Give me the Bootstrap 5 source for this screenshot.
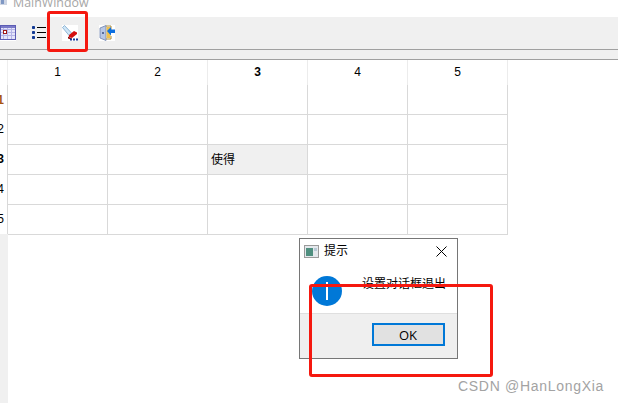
<!doctype html>
<html lang="zh"><head><meta charset="utf-8"><title>MainWindow</title>
<link href="https://cdn.jsdelivr.net/npm/bootstrap@5.3.0/dist/css/bootstrap.min.css" rel="stylesheet">
<style>
html,body{width:618px;height:403px;overflow:hidden;background:#fff;margin:0;font-family:"Liberation Sans","Noto Sans CJK SC",sans-serif;font-size:12px;color:#000}
.page-stage{position:relative;width:618px;height:403px;overflow:hidden}
.title-strip{height:17px;overflow:hidden;background:#fff;color:#a6a6a6;font:12.4px/13px "Open Sans",sans-serif}
.title-strip span{display:block;margin-top:-4px;margin-left:13px}
.title-ico{position:absolute;left:0;top:0}
.tool-strip{height:32px;background:#f0f0f0;padding-top:8px}
.tool-slot{width:16px;height:16px;background:#fff;line-height:0}
.slot-plain{background:transparent}
.gap-list{margin-left:15px}
.gap-brush{margin-left:15px}
.gap-door{margin-left:21px}
.sep-strip{height:11px;background:#f0f0f0;border-top:1px solid #a0a0a0;border-bottom:1px solid #a0a0a0}
.sheet-wrap{height:343px}
.row-head{width:8px;background:#f0f0f0;flex:none;height:343px}
.rh-cell{background:#fff;overflow:hidden;display:flex;align-items:center;justify-content:flex-end;height:30px;padding-right:3px;border-right:1px solid #d9d9d9;color:#000;font:12px "Liberation Sans",sans-serif;white-space:nowrap}
.rh-top{height:25px;background:#fff;border-right:1px solid #eee}
.rh-first{height:29px;color:#a8560f;font-weight:700}
.rh-bold{font-weight:700}
.sheet-grid{display:flex;flex-direction:column;width:500px;align-self:flex-start}
.hd-cell{height:25px;border-right:1px solid #ececec;text-align:center;font:12px/25px "Liberation Sans",sans-serif;background:#fff}
.hd-cell.strong{font-weight:700}
.grid-head{display:grid;grid-template-columns:repeat(5,100px);height:25px}
.body-cell{border-right:1px solid #d9d9d9;border-bottom:1px solid #d9d9d9;padding-left:3px;line-height:30px;font-size:12px;background:#fff}
.body-cell.picked{background:#f0f0f0}
.grid-rows{display:grid;grid-template-columns:repeat(5,100px);grid-template-rows:repeat(5,30px)}
.msg-win{position:absolute;left:299px;top:238px;width:159px;height:121px;border:1px solid #767676;background:#fff;display:flex;flex-direction:column}
.msg-top{height:24px;padding-left:4px;font-size:12px}
.msg-top .ttl{margin-left:5px;color:#000}
.msg-close{margin-left:auto;margin-right:10px;display:block}
.msg-main{height:50px;position:relative}
.msg-text{position:absolute;left:62px;top:14px;font-size:12px;line-height:14px;white-space:nowrap}
.msg-info{position:absolute;left:12px;top:13px}
.msg-foot{flex:1;background:#efefef;border-top:1px solid #dfdfdf;display:flex;justify-content:flex-end;padding:9px 12px 0 0}
.ok-btn{width:73px;height:23px;border:2px solid #0078d7;background:#e1e1e1;color:#000;font:13px/18px "Open Sans","Liberation Sans",sans-serif;text-align:center;padding:0 1px 0 0;border-radius:0}
.red-mark{position:absolute;border:3px solid #f5180f;border-radius:3px;pointer-events:none}
.mark-a{left:47px;top:11px;width:41px;height:41px}
.mark-b{left:309px;top:284px;width:184px;height:93px}
.wm-text{position:absolute;left:458px;top:377px;color:#a3a3a3;font:14px/18px "Liberation Sans",sans-serif;letter-spacing:.7px;white-space:nowrap}
</style></head><body>
<div class="page-stage">
 <div class="title-strip"><span>MainWindow</span></div>
 <svg class="title-ico" width="7" height="7" viewBox="0 0 7 7"><rect width="7" height="5" fill="#cfd6e4"/><rect x="1" width="3" height="4" fill="#7f98c4"/></svg>
 <div class="tool-strip d-flex">
  <div class="tool-slot"><svg width="16" height="16" viewBox="0 0 16 16"><rect x=".5" y=".5" width="15" height="14" fill="#e4e4fa" stroke="#5c5cb4"/><path d="M1 4.500h14M1 7.500h14M1 10.500h14M3.500 1v13M7.500 1v13M11.500 1v13" stroke="#b4b4e6" fill="none"/><rect x="1" y="1" width="14" height="2" fill="#7a7ac8"/><rect x="3.500" y="5.500" width="3" height="3" fill="#fff" stroke="#a01818"/></svg></div>
  <div class="tool-slot slot-plain gap-list"><svg width="16" height="16" viewBox="0 0 16 16"><g fill="#123a94"><rect x="1" y="1" width="3" height="3" rx=".7"/><rect x="1" y="6" width="3" height="3" rx=".7"/><rect x="1" y="11" width="3" height="3" rx=".7"/></g><path d="M6 2.500h9M6 7.500h9M6 12.500h9" stroke="#000" stroke-width="1"/></svg></div>
  <div class="tool-slot gap-brush"><svg width="16" height="16" viewBox="0 0 16 16"><path d="M.5 2.500l2-2 7.500 8-2.500 2.500z" fill="#cfe6f7" stroke="#7aa7cc" stroke-width=".8"/><path d="M7 10l5-4 3 1.500v1.500l-5 4-3-1z" fill="#d30f0f"/><path d="M6 11.500l4 2-1 1-3-1z" fill="#8d0a0a"/><g fill="#12379a"><rect x="8" y="13.500" width="2" height="2"/><rect x="11" y="13.500" width="2" height="2"/><rect x="14" y="13.500" width="2" height="2"/></g></svg></div>
  <div class="tool-slot gap-door"><svg width="16" height="16" viewBox="0 0 16 16"><path d="M1 3l6-2.500v15L1 13z" fill="#b7c7e6" stroke="#6e83ad" stroke-width=".8"/><path d="M7 1h5v4M12 11v3H7" fill="none" stroke="#a98a3a"/><rect x="7.500" y="2" width="4" height="11" fill="#eec04e"/><circle cx="4" cy="8" r="1" fill="#3a4f80"/><path d="M8 6l4-4v2.500h4v3.500h-4v2.500z" fill="#0c6fe0"/></svg></div>
 </div>
 <div class="sep-strip"></div>
 <div class="sheet-wrap d-flex">
  <div class="row-head">
   <div class="rh-top"></div>
   <div class="rh-cell rh-first"><span>1</span></div>
   <div class="rh-cell"><span>2</span></div>
   <div class="rh-cell rh-bold"><span>3</span></div>
   <div class="rh-cell"><span>4</span></div>
   <div class="rh-cell"><span>5</span></div>
  </div>
  <div class="sheet-grid">
   <div class="grid-head">
    <div class="hd-cell">1</div><div class="hd-cell">2</div><div class="hd-cell strong">3</div><div class="hd-cell">4</div><div class="hd-cell">5</div>
   </div>
   <div class="grid-rows">
    <div class="body-cell"></div><div class="body-cell"></div><div class="body-cell"></div><div class="body-cell"></div><div class="body-cell"></div>
    <div class="body-cell"></div><div class="body-cell"></div><div class="body-cell"></div><div class="body-cell"></div><div class="body-cell"></div>
    <div class="body-cell"></div><div class="body-cell"></div><div class="body-cell picked">使得</div><div class="body-cell"></div><div class="body-cell"></div>
    <div class="body-cell"></div><div class="body-cell"></div><div class="body-cell"></div><div class="body-cell"></div><div class="body-cell"></div>
    <div class="body-cell"></div><div class="body-cell"></div><div class="body-cell"></div><div class="body-cell"></div><div class="body-cell"></div>
   </div>
  </div>
 </div>
 <div class="msg-win">
  <div class="msg-top d-flex align-items-center">
   <svg width="15" height="13" viewBox="0 0 15 13"><rect x=".5" y=".5" width="14" height="12" fill="#e4e8ec" stroke="#9a9a9a"/><rect x="2" y="3" width="7" height="8" fill="#4f8f7f"/><rect x="10" y="3" width="3" height="3" fill="#b9c9d6"/></svg>
   <span class="ttl">提示</span>
   <svg class="msg-close" width="11" height="11" viewBox="0 0 11 11"><path d="M.5.500l10 10M10.500.500l-10 10" stroke="#000" stroke-width="1"/></svg>
  </div>
  <div class="msg-main">
   <svg class="msg-info" width="30" height="30" viewBox="0 0 30 30"><circle cx="15" cy="15" r="15" fill="#0078d7"/><rect x="14" y="6" width="2" height="18" fill="#fff"/></svg>
   <div class="msg-text">设置对话框退出</div>
  </div>
  <div class="msg-foot"><button type="button" class="ok-btn">OK</button></div>
 </div>
 <div class="red-mark mark-a"></div>
 <div class="red-mark mark-b"></div>
 <div class="wm-text">CSDN @HanLongXia</div>
</div>
<script src="https://cdn.jsdelivr.net/npm/bootstrap@5.3.0/dist/js/bootstrap.bundle.min.js"></script>
</body></html>
